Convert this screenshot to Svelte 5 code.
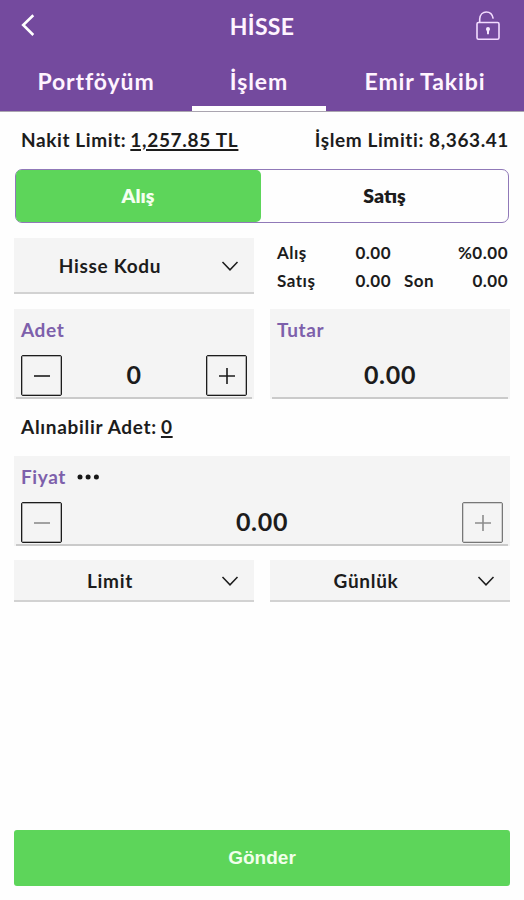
<script>
  const tabs = ['Portföyüm', 'İşlem', 'Emir Takibi'];
  let activeTab = $state(1);
  let side = $state('buy');
</script>

{#snippet chevron()}
  <svg class="chevron" width="18" height="12" viewBox="0 0 18 12">
    <path d="M1.5 2 L9 9.8 L16.5 2" fill="none" stroke="currentColor" stroke-width="1.5" />
  </svg>
{/snippet}

{#snippet step(kind, tone)}
  <button class="step {kind} {tone}" aria-label={kind}>
    <svg width="18" height="18" viewBox="0 0 18 18">
      <path d={kind === 'plus' ? 'M1 9 H17 M9 1 V17' : 'M1 9 H17'} stroke="currentColor" stroke-width="1.6" />
    </svg>
  </button>
{/snippet}

<div class="screen">
  <header>
    <div class="titlebar">
      <svg class="back" width="16" height="24" viewBox="0 0 16 24">
        <path d="M13.3 2.2 L3.2 12 L13.3 22" fill="none" stroke="#fff" stroke-width="2.6" />
      </svg>
      <h1>HİSSE</h1>
      <svg class="lock" width="26" height="32" viewBox="0 0 26 32">
        <rect x="2" y="12.5" width="22" height="16.8" rx="1.5" fill="none" stroke="#f3dcff" stroke-width="1.6" />
        <path d="M4.7 12.5 V9 C5 4.4 8 2 11.3 2 C15 2 17.5 4.6 18.2 8.6" fill="none" stroke="#f3dcff" stroke-width="1.6" />
        <path d="M11 19 a2 2 0 1 1 4 0 c0 1-.7 1.4-.9 2.3 l-.2 3 h-1.8 l-.2-3 c-.2-.9-.9-1.3-.9-2.3z" fill="#f8eaff" />
      </svg>
    </div>
    <nav>
      {#each tabs as tab, i}
        <button class="tab" class:active={activeTab === i} onclick={() => (activeTab = i)}><span>{tab}</span></button>
      {/each}
    </nav>
  </header>

  <main>
    <div class="limits">
      <div class="cash"><span>Nakit Limit:</span><u>1,257.85 TL</u></div>
      <div class="trade">İşlem Limiti: 8,363.41</div>
    </div>

    <div class="sides">
      <button class:on={side === 'buy'} onclick={() => (side = 'buy')}>Alış</button>
      <button class:on={side === 'sell'} onclick={() => (side = 'sell')}>Satış</button>
    </div>

    <div class="cols symbol">
      <div class="select tall"><span>Hisse Kodu</span>{@render chevron()}</div>
      <div class="quotes">
        <span>Alış</span><span class="num">0.00</span><span></span><span class="num">%0.00</span>
        <span>Satış</span><span class="num">0.00</span><span class="last">Son</span><span class="num">0.00</span>
      </div>
    </div>

    <div class="cols amounts">
      <div class="field qty">
        <div class="label">Adet</div>
        <div class="row">{@render step('minus', 'dark')}<span class="value">0</span>{@render step('plus', 'dark')}</div>
      </div>
      <div class="field total">
        <div class="label">Tutar</div>
        <div class="row"><span class="value">0.00</span></div>
      </div>
    </div>

    <div class="available"><span>Alınabilir Adet:</span><u>0</u></div>

    <div class="field price">
      <div class="label">
        <span>Fiyat</span>
        <svg width="24" height="6" viewBox="0 0 24 6"><circle cx="3" cy="3" r="2.5" /><circle cx="11.1" cy="3" r="2.5" /><circle cx="19.4" cy="3" r="2.5" /></svg>
      </div>
      <div class="row">{@render step('minus', 'muted')}<span class="value">0.00</span>{@render step('plus', 'soft')}</div>
    </div>

    <div class="cols order">
      <div class="select"><span>Limit</span>{@render chevron()}</div>
      <div class="select"><span>Günlük</span>{@render chevron()}</div>
    </div>

    <button class="submit">Gönder</button>
  </main>
</div>

<style>
  :global(body) {
    margin: 0;
    background: #fefefe;
  }

  * {
    box-sizing: border-box;
  }

  .screen {
    height: 900px;
    display: flex;
    flex-direction: column;
    font-family: Lato, "Open Sans", sans-serif;
    font-weight: 700;
    color: #1c1c1c;
    white-space: nowrap;
  }

  button {
    font: inherit;
    color: inherit;
    border: 0;
    margin: 0;
    padding: 0;
    background: none;
  }

  header {
    height: 112px;
    background: #744a9e;
    border-bottom: 1px solid #aaa5b0;
    color: #fff4ff;
  }

  .titlebar {
    height: 52px;
    display: grid;
    grid-template-columns: 40px 1fr 40px;
    align-items: center;
    padding: 0 20px;
  }

  h1 {
    margin: 0;
    text-align: center;
    font-size: 23px;
    font-weight: 700;
    letter-spacing: 0.3px;
  }

  .back {
    margin-top: -2px;
  }

  .lock {
    justify-self: end;
    margin-right: 3px;
    margin-top: -1px;
  }

  nav {
    height: 59px;
    display: grid;
    grid-template-columns: 192px 134px 198px;
  }

  .tab {
    padding-top: 3px;
    font-size: 23px;
    letter-spacing: 0.9px;
    border-bottom: 5px solid transparent;
  }

  .tab.active {
    border-bottom-color: #fff;
  }

  main {
    flex: 1;
    display: flex;
    flex-direction: column;
    padding: 0 14px 14px;
  }

  .limits {
    height: 57px;
    display: flex;
    justify-content: space-between;
    align-items: center;
    padding: 0 1px 2px 7px;
    font-size: 19px;
    letter-spacing: 0.6px;
  }

  .cash, .available {
    display: flex;
    gap: 4px;
  }

  u {
    text-decoration-thickness: 2px;
    text-underline-offset: 2px;
  }

  .cash u {
    letter-spacing: 0.7px;
  }

  .sides {
    height: 54px;
    margin: 0 1px;
    display: flex;
    border: 1px solid #9079b8;
    border-radius: 7px;
    font-size: 19.5px;
    font-weight: 800;
  }

  .sides button {
    width: 247px;
    padding-bottom: 2px;
    border-radius: 5px;
  }

  .sides button:first-child {
    width: 245px;
    padding-right: 1px;
  }

  .sides .on {
    background: #5dd55a;
    color: #f4fff0;
  }

  .cols {
    display: grid;
    grid-template-columns: 240px 240px;
    gap: 16px;
  }

  .symbol {
    margin-top: 15px;
  }

  .select {
    height: 42px;
    display: flex;
    align-items: center;
    justify-content: space-between;
    padding: 0 15px 0 0;
    background: #f4f4f4;
    border-bottom: 2px solid #d2d2d2;
    font-size: 19px;
    letter-spacing: 0.7px;
  }

  .select span {
    flex: 1;
    text-align: center;
    padding-right: 15px;
  }

  .chevron {
    margin-top: 2px;
  }

  .tall {
    height: 56px;
  }

  .quotes {
    display: grid;
    grid-template-columns: 60px 54px 50px 1fr;
    grid-template-rows: 28px 28px;
    align-items: center;
    padding: 0 2px 0 7px;
    font-size: 17px;
    letter-spacing: 0.5px;
  }

  .num {
    text-align: right;
  }

  .last {
    padding-left: 13px;
  }

  .amounts {
    margin-top: 15px;
  }

  /* the underline stops 2px short of both edges */
  .field {
    height: 90px;
    padding: 0 7px;
    background: linear-gradient(#cacaca, #cacaca) center bottom / calc(100% - 4px) 2px no-repeat #f4f4f4;
  }

  .label {
    height: 46px;
    display: flex;
    align-items: center;
    gap: 11px;
    padding-bottom: 6px;
    font-size: 19px;
    letter-spacing: 0.6px;
    color: #7d60ab;
  }

  .label svg {
    fill: #171717;
    margin-top: 2px;
  }

  .row {
    height: 41px;
    display: flex;
    align-items: center;
  }

  .value {
    flex: 1;
    text-align: center;
    font-size: 25px;
    letter-spacing: 0.7px;
    padding-bottom: 4px;
  }

  .step {
    width: 41px;
    height: 41px;
    display: grid;
    place-items: center;
    border: 1px solid #1c1c1c;
    border-radius: 2px;
    box-shadow: inset 0 0 0 1px rgba(0, 0, 0, 0.28);
  }

  .step.muted svg, .step.soft svg {
    color: #8c8c8c;
  }

  .step.soft {
    border-color: #777;
    box-shadow: inset 0 0 0 1px rgba(0, 0, 0, 0.14);
  }

  .available {
    height: 57px;
    align-items: center;
    padding: 0 0 2px 7px;
    font-size: 19px;
    letter-spacing: 0.7px;
  }

  .order {
    margin-top: 14px;
  }

  .submit {
    height: 56px;
    margin-top: auto;
    border-radius: 3px;
    background: #5dd55a;
    color: #f1ffeb;
    font-family: "Liberation Sans", Arial, sans-serif;
    font-size: 19px;
    font-weight: 700;
  }
</style>
